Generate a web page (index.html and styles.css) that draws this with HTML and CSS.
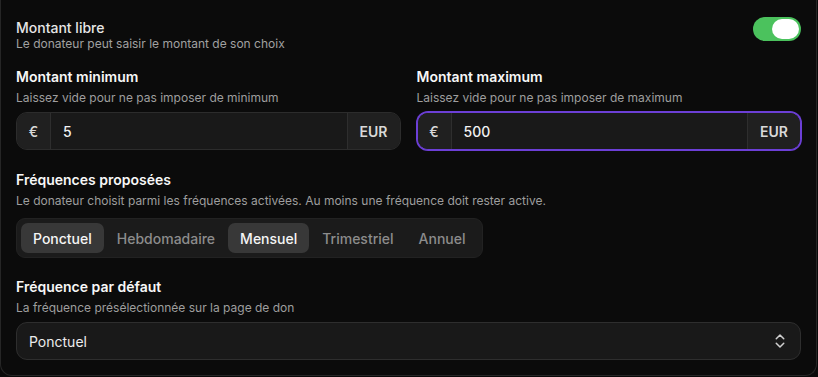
FILE: index.html
```html
<!DOCTYPE html>
<html lang="fr">
<head>
<meta charset="utf-8">
<title>Montant</title>
<link rel="stylesheet" href="styles.css">
</head>
<body>
<div class="card">
  <div class="toggle-row">
    <div class="toggle-text">
      <div class="toggle-title">Montant libre</div>
      <div class="toggle-desc">Le donateur peut saisir le montant de son choix</div>
    </div>
    <span class="switch"><span class="knob"></span></span>
  </div>

  <div class="grid2">
    <div class="field">
      <div class="label">Montant minimum</div>
      <div class="hint">Laissez vide pour ne pas imposer de minimum</div>
      <div class="input-group">
        <span class="addon prefix">€</span>
        <span class="value">5</span>
        <span class="addon suffix">EUR</span>
      </div>
    </div>
    <div class="field">
      <div class="label">Montant maximum</div>
      <div class="hint">Laissez vide pour ne pas imposer de maximum</div>
      <div class="input-group focused">
        <span class="addon prefix">€</span>
        <span class="value">500</span>
        <span class="addon suffix">EUR</span>
      </div>
    </div>
  </div>

  <div class="section freq">
    <div class="label">Fréquences proposées</div>
    <div class="hint">Le donateur choisit parmi les fréquences activées. Au moins une fréquence doit rester active.</div>
    <div class="segmented">
      <span class="seg active">Ponctuel</span>
      <span class="seg">Hebdomadaire</span>
      <span class="seg active">Mensuel</span>
      <span class="seg">Trimestriel</span>
      <span class="seg">Annuel</span>
    </div>
  </div>

  <div class="section default">
    <div class="label">Fréquence par défaut</div>
    <div class="hint">La fréquence présélectionnée sur la page de don</div>
    <div class="select">
      <span class="select-value">Ponctuel</span>
      <svg class="chevrons" viewBox="0 0 24 24" width="18" height="18" fill="none" stroke="currentColor" stroke-width="2" stroke-linecap="round" stroke-linejoin="round"><path d="m7 15 5 5 5-5"/><path d="m7 9 5-5 5 5"/></svg>
    </div>
  </div>
</div>
</body>
</html>
```

FILE: styles.css
```css
* { box-sizing: border-box; }

html, body {
  margin: 0;
  padding: 0;
  background: #0a0a0a;
}

body {
  font-family: Inter, "Noto Sans", "Liberation Sans", sans-serif;
  color: #f2f2f2;
  width: 818px;
  height: 377px;
  overflow: hidden;
}

.card {
  width: 817px;
  height: 376px;
  background: #0b0b0b;
  border: 1px solid #262626;
  border-top: none;
  border-radius: 0 0 12px 12px;
  padding: 19px 15px 15px 15px;
}

.toggle-row {
  display: flex;
  justify-content: space-between;
  align-items: flex-start;
}

.toggle-title {
  font-size: 14px;
  line-height: 18px;
  font-weight: 500;
  color: #e6e6e6;
}

.toggle-desc {
  font-size: 12px;
  line-height: 14px;
  color: #a1a1a1;
}

.switch {
  width: 48px;
  height: 24px;
  margin-top: -2px;
  border-radius: 12px;
  background: #4bc25d;
  display: flex;
  align-items: center;
  justify-content: flex-end;
  padding: 2px;
}

.knob {
  width: 27px;
  height: 20px;
  border-radius: 10px;
  background: #ffffff;
}

.grid2 {
  display: grid;
  grid-template-columns: 1fr 1fr;
  column-gap: 16px;
  margin-top: 16px;
}

.label {
  font-size: 14px;
  line-height: 20px;
  font-weight: 600;
  color: #f7f7f7;
}

.hint {
  margin-top: 3px;
  font-size: 12px;
  line-height: 16px;
  color: #9e9e9e;
}

.input-group {
  margin-top: 6px;
  height: 38px;
  display: flex;
  align-items: stretch;
  border: 1px solid #2c2c2c;
  border-radius: 11px;
  background: #191919;
  overflow: hidden;
  font-size: 14px;
  font-weight: 500;
}

.input-group.focused {
  border-color: #6c3fd6;
  box-shadow: 0 0 0 1px #6c3fd6;
}

.addon {
  display: flex;
  align-items: center;
  background: #202020;
  color: #d9d9d9;
}

.prefix {
  width: 34px;
  justify-content: center;
  border-right: 1px solid #2e2e2e;
}

.suffix {
  padding: 0 12px;
  border-left: 1px solid #2e2e2e;
  font-weight: 600;
}

.value {
  flex: 1;
  display: flex;
  align-items: center;
  padding-left: 12px;
  color: #f2f2f2;
}

.section.freq { margin-top: 20px; }
.section.default { margin-top: 19px; }

.segmented {
  margin-top: 9px;
  display: inline-flex;
  gap: 1px;
  padding: 4px;
  border: 1px solid #222222;
  border-radius: 9px;
  background: #1b1b1b;
}

.seg {
  height: 30px;
  padding: 0 12px;
  display: flex;
  align-items: center;
  border-radius: 7px;
  font-size: 14px;
  font-weight: 500;
  color: #8c8c8c;
}

.seg.active {
  background: #383838;
  color: #f5f5f5;
}

.select {
  margin-top: 6px;
  height: 38px;
  display: flex;
  align-items: center;
  justify-content: space-between;
  padding: 0 11px 0 12px;
  border: 1px solid #2e2e2e;
  border-radius: 11px;
  background: #191919;
  font-size: 14px;
  color: #ececec;
}

.chevrons {
  color: #d0d0d0;
}
```
